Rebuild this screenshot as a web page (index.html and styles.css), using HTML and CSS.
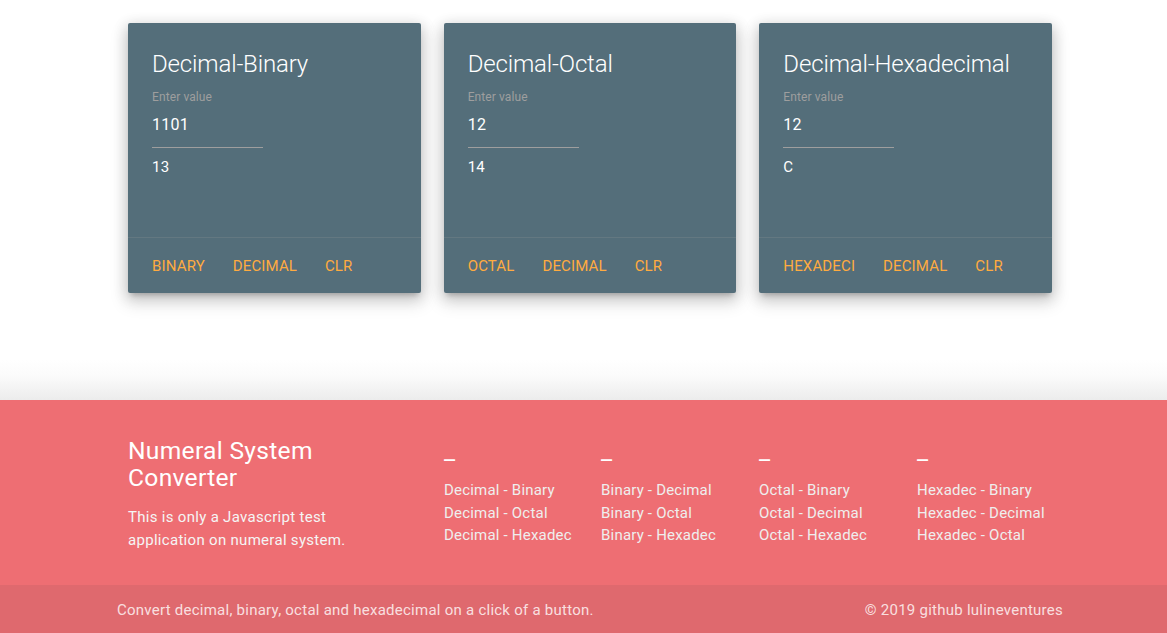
FILE: index.html
```html
<!DOCTYPE html>
<html lang="en">
<head>
<meta charset="utf-8">
<title>Numeral System Converter</title>
<link rel="stylesheet" href="styles.css">
</head>
<body>
<main class="main">
  <div class="cards">
    <div class="card">
      <div class="card-content">
        <div class="card-title">Decimal-Binary</div>
        <label class="field-label">Enter value</label>
        <input class="field-input" type="text" value="1101">
        <p class="result">13</p>
      </div>
      <div class="card-action">
        <a href="#">BINARY</a>
        <a href="#">DECIMAL</a>
        <a href="#">CLR</a>
      </div>
    </div>
    <div class="card">
      <div class="card-content">
        <div class="card-title">Decimal-Octal</div>
        <label class="field-label">Enter value</label>
        <input class="field-input" type="text" value="12">
        <p class="result">14</p>
      </div>
      <div class="card-action">
        <a href="#">OCTAL</a>
        <a href="#">DECIMAL</a>
        <a href="#">CLR</a>
      </div>
    </div>
    <div class="card">
      <div class="card-content">
        <div class="card-title">Decimal-Hexadecimal</div>
        <label class="field-label">Enter value</label>
        <input class="field-input" type="text" value="12">
        <p class="result">C</p>
      </div>
      <div class="card-action">
        <a href="#">HEXADECI</a>
        <a href="#">DECIMAL</a>
        <a href="#">CLR</a>
      </div>
    </div>
  </div>
  <div class="fade"></div>
</main>
<footer class="page-footer">
  <div class="footer-main">
    <div class="footer-grid">
      <div class="footer-about">
        <h5 class="footer-title">Numeral System Converter</h5>
        <p class="footer-text">This is only a Javascript test application on numeral system.</p>
      </div>
      <div class="footer-col">
        <h5 class="footer-title">_</h5>
        <ul class="footer-links">
          <li><a href="#">Decimal - Binary</a></li>
          <li><a href="#">Decimal - Octal</a></li>
          <li><a href="#">Decimal - Hexadec</a></li>
        </ul>
      </div>
      <div class="footer-col">
        <h5 class="footer-title">_</h5>
        <ul class="footer-links">
          <li><a href="#">Binary - Decimal</a></li>
          <li><a href="#">Binary - Octal</a></li>
          <li><a href="#">Binary - Hexadec</a></li>
        </ul>
      </div>
      <div class="footer-col">
        <h5 class="footer-title">_</h5>
        <ul class="footer-links">
          <li><a href="#">Octal - Binary</a></li>
          <li><a href="#">Octal - Decimal</a></li>
          <li><a href="#">Octal - Hexadec</a></li>
        </ul>
      </div>
      <div class="footer-col">
        <h5 class="footer-title">_</h5>
        <ul class="footer-links">
          <li><a href="#">Hexadec - Binary</a></li>
          <li><a href="#">Hexadec - Decimal</a></li>
          <li><a href="#">Hexadec - Octal</a></li>
        </ul>
      </div>
    </div>
  </div>
  <div class="footer-copyright">
    <span>Convert decimal, binary, octal and hexadecimal on a click of a button.</span>
    <span>© 2019 github lulineventures</span>
  </div>
</footer>
</body>
</html>
```

FILE: styles.css
```css
* { box-sizing: border-box; }

html, body {
  margin: 0;
  padding: 0;
  background: #fff;
  font-family: Roboto, "Liberation Sans", sans-serif;
  font-size: 15px;
  line-height: 1.5;
  letter-spacing: 0.25px;
  color: rgba(0, 0, 0, 0.87);
  overflow: hidden;
}

a { text-decoration: none; }

.main {
  padding-top: 23px;
}

.cards {
  width: 924px;
  margin-left: 128px;
  display: grid;
  grid-template-columns: repeat(3, 1fr);
  column-gap: 23px;
}

.card {
  background: #546e7a;
  border-radius: 2px;
  box-shadow: 0 8px 17px 2px rgba(0,0,0,0.14), 0 3px 14px 2px rgba(0,0,0,0.12), 0 5px 5px -3px rgba(0,0,0,0.2);
}

.card-content {
  height: 214px;
  padding: 25px 24px 0;
  display: flex;
  flex-direction: column;
  align-items: flex-start;
}

.card-title {
  font-size: 24px;
  font-weight: 300;
  line-height: 32px;
  letter-spacing: -0.15px;
  color: #fff;
}

.field-label {
  display: block;
  margin-top: 10.6px;
  font-size: 12px;
  line-height: 12px;
  letter-spacing: 0.1px;
  color: #9e9e9e;
}

.field-input {
  display: block;
  width: 111px;
  height: 45px;
  margin: 0;
  padding: 0;
  border: none;
  border-bottom: 1px solid #9e9e9e;
  border-radius: 0;
  background: transparent;
  outline: none;
  color: #fff;
  font-family: Roboto, "Liberation Sans", sans-serif;
  font-size: 16px;
  letter-spacing: 0.25px;
}

.result {
  margin: 8.7px 0 0;
  font-size: 15px;
  line-height: 22.5px;
  color: #fff;
}

.card-action {
  border-top: 1px solid rgba(160, 160, 160, 0.2);
  padding: 17px 24px 15px;
  line-height: 22.5px;
  height: 56px;
  white-space: nowrap;
  letter-spacing: 0.15px;
}

.card-action a {
  color: #ffab40;
  margin-right: 24px;
  text-transform: uppercase;
}

.fade {
  margin-top: 67px;
  height: 40px;
  background: linear-gradient(to bottom, #ffffff 0%, #fbfbfb 40%, #ececec 100%);
}

.page-footer {
  background: #ee6e73;
  color: #fff;
}

.footer-main {
  height: 185px;
  padding-top: 21px;
}

.footer-grid {
  width: 924px;
  margin-left: 128px;
  display: grid;
  grid-template-columns: 316px 157px 158px 158px 1fr;
}

.footer-about {
  width: 262px;
}

.footer-title {
  margin: 16.4px 0 9.84px;
  font-size: 24.6px;
  font-weight: 400;
  line-height: 1.1;
  letter-spacing: 0.3px;
  color: #fff;
}

.footer-text {
  margin: 15px 0;
  letter-spacing: 0.3px;
  color: #f5f5f5;
}

.footer-links {
  list-style: none;
  margin: 15px 0;
  padding: 0;
  letter-spacing: 0.2px;
}

.footer-links a {
  color: #eeeeee;
}

.footer-copyright {
  height: 50px;
  padding: 0 104px 0 117px;
  display: flex;
  align-items: center;
  justify-content: space-between;
  background: rgba(51, 51, 51, 0.08);
  color: rgba(255, 255, 255, 0.8);
}
```
